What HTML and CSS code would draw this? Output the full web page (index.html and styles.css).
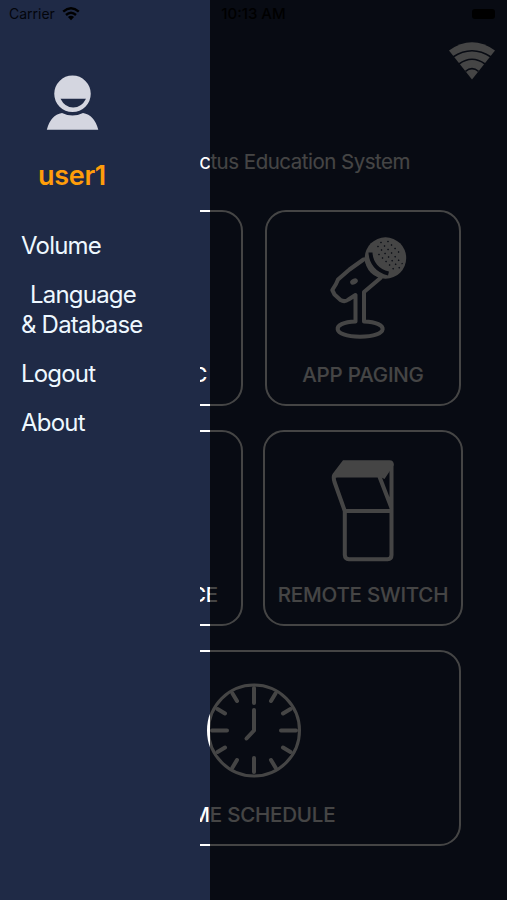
FILE: index.html
```
<!DOCTYPE html>
<html lang="en">
<head>
    <meta charset="UTF-8">
    <meta name="viewport" content="width=device-width, initial-scale=1.0">
    <title>Education System</title>
    <link rel="stylesheet" href="styles.css">
</head>
<body>
    <div class="app">
        <main class="home">
            <header class="home-header">
                <svg class="signal" width="48" height="40" viewBox="0 0 48 40">
                    <path class="solid" d="M1 9.500Q24 -7 47 9.500L24 38.500Z"/>
                    <path class="gap" d="M5 16Q24 3.500 43 16M11 23Q24 13.500 37 23M17.500 30.300Q24 25 30.500 30.300"/>
                </svg>
            </header>
            <h1 class="title">ctus Education System</h1>

            <div class="grid">
                <a class="card" href="#music"><span class="label label-music">C</span></a>
                <a class="card" href="#paging">
                    <svg class="icon" width="100" height="120" viewBox="-7.500 0 100 120">
                        <circle class="solid" cx="65" cy="28" r="20.700"/>
                        <path class="band" d="M45.500 27Q49 40 61 46.500"/>
                        <path class="slit" d="M50 22.500C50.500 33 57 41 68 43.500"/>
                        <g class="dots">
                            <path d="M60 12l22 22M67 11l14 14M57 16l23 23M58 24l17 17"/>
                        </g>
                        <path class="line" d="M43 29.500L29 39.500L17.500 49.500L15.500 54L11.800 60L14 64.500L20 70Q24 72.500 28 69.500L35 65V91.500C10 92 11 106.800 39.500 106.800C69 106.800 69 92 43.500 91.500V62L60 48"/>
                        <ellipse class="solid" cx="33.500" cy="51.500" rx="4" ry="2.800" transform="rotate(-25 33.500 51.500)"/>
                    </svg>
                    <span class="label">APP PAGING</span>
                </a>
                <a class="card" href="#source"><span class="label label-source">CE</span></a>
                <a class="card card-wide" href="#switch">
                    <svg class="icon" width="100" height="120" viewBox="-7.500 0 100 120">
                        <path class="solid" d="M22.500 10.300H69Q73.500 10.500 73.300 15L64 29L59 26.500H15.500L12 24Z"/>
                        <path class="line" d="M13.500 25.500Q12.800 28 14 32L24.300 61H71V15M13.500 27Q14 25.500 17 25.500H58.500L71 58M24.300 61V105Q24.500 109 28.500 109.300H67Q71 109 71 105V58"/>
                    </svg>
                    <span class="label">REMOTE SWITCH</span>
                </a>
                <a class="card card-full" href="#schedule">
                    <svg class="icon" width="100" height="120" viewBox="0 0 100 120">
                        <circle class="line" cx="50" cy="60.500" r="45.500"/>
                        <path class="line" d="M50 18V33M50 88V102M8 60.500H23M77 60.500H92M28.500 23.500L33 31M71.500 23.500L67 31M13.500 39L21 43.500M86.500 39L79 43.500M13.500 82L21 77.500M86.500 82L79 77.500M28.500 97.500L33 90M71.500 97.500L67 90"/>
                        <path class="line" d="M50 40V60.500L42.500 68.500"/>
                    </svg>
                    <span class="label">TIME SCHEDULE</span>
                </a>
            </div>
        </main>

        <div class="backdrop"></div>

        <aside class="drawer">
            <svg class="avatar" width="54" height="58" viewBox="0 0 54 58">
                <path d="M.800 54.800Q4.500 40 16 38Q26.500 43 37 38Q48.500 40 52.300 54.800Z"/>
                <circle class="head" cx="26.500" cy="18.800" r="19.500"/>
                <path class="smile" d="M14.500 23.800H40Q35.500 32.600 27.200 32.600Q19 32.600 14.500 23.800Z"/>
            </svg>
            <p class="username">user1</p>
            <nav>
                <ul class="menu">
                    <li><a href="#volume">Volume</a></li>
                    <li><a href="#language"><span class="indent">Language</span><br>&amp; Database</a></li>
                    <li><a href="#logout">Logout</a></li>
                    <li><a href="#about">About</a></li>
                </ul>
            </nav>
        </aside>

        <div class="statusbar">
            <span class="carrier">
                Carrier
                <svg width="18" height="14" viewBox="0 0 18 14">
                    <path d="M1.200 4.700Q9 -2.200 16.800 4.700M4 8Q9 3.500 14 8"/>
                    <path class="tip" d="M9 13.300L5.900 10.100Q9 7.600 12.100 10.100Z"/>
                </svg>
            </span>
            <span class="time">10:13 AM</span>
            <span class="battery"></span>
        </div>
    </div>
</body>
</html>
```
FILE: styles.css
```
* {
    margin: 0;
    padding: 0;
    box-sizing: border-box;
}

body {
    font-family: Inter, "Liberation Sans", sans-serif;
    background: #1f2a46;
    color: #fff;
}

a {
    color: inherit;
    text-decoration: none;
}

.app {
    position: relative;
    width: 507px;
    height: 900px;
    overflow: hidden;
}

/* home screen */
.home-header {
    display: flex;
    justify-content: flex-end;
    height: 147px;
    padding: 41px 11px 0 0;
}

.solid {
    fill: #fff;
}

.gap {
    fill: none;
    stroke: #1f2a46;
    stroke-width: 1.6;
}

.title {
    height: 63px;
    padding-right: 97px;
    font-size: 20.5px;
    font-weight: 400;
    letter-spacing: -0.5px;
    line-height: 30px;
    text-align: right;
    white-space: nowrap;
}

.grid {
    display: grid;
    grid-template-columns: 196px 196px;
    grid-auto-rows: 196px;
    gap: 24px 22px;
    padding-left: 47px;
}

.card {
    display: flex;
    flex-direction: column;
    align-items: center;
    justify-content: flex-end;
    padding-bottom: 16px;
    border: 2px solid #fff;
    border-radius: 21px;
}

.card-wide {
    margin: 0 -2px;
}

.card-full {
    grid-column: 1 / 3;
}

.icon {
    margin-bottom: 11px;
}

.line {
    fill: none;
    stroke: #fff;
    stroke-width: 4;
    stroke-linecap: round;
    stroke-linejoin: round;
}

circle.line {
    stroke-width: 3;
}

.band {
    fill: none;
    stroke: #fff;
    stroke-width: 5;
}

.slit {
    fill: none;
    stroke: #1f2a46;
    stroke-width: 4;
}

.dots {
    fill: none;
    stroke: #1f2a46;
    stroke-width: 1.4;
    stroke-dasharray: 1.4 3.6;
}

.label {
    font-size: 20.5px;
    font-weight: 500;
    letter-spacing: -0.2px;
    line-height: 27px;
    white-space: nowrap;
}

.label-music,
.label-source {
    align-self: flex-end;
}

.label-music {
    margin-right: 34px;
}

.label-source {
    margin-right: 23px;
}

/* side menu */
.backdrop {
    position: absolute;
    top: 0;
    bottom: 0;
    left: 210px;
    right: 0;
    background: rgba(0, 0, 0, 0.73);
}

.drawer {
    position: absolute;
    top: 0;
    left: 0;
    width: 200px;
    height: 100%;
    padding: 75px 21px 0;
    background: #1f2a46;
}

.avatar {
    display: block;
    margin-left: 25px;
    fill: #d4d6e0;
}

.avatar .head {
    stroke: #1f2a46;
    stroke-width: 2.5;
}

.avatar .smile {
    fill: #1f2a46;
}

.username {
    margin: 26px 0 0 17px;
    color: #ff9d0a;
    font-size: 27px;
    font-weight: 600;
    letter-spacing: -0.3px;
    line-height: 34px;
}

.menu {
    margin-top: 38px;
    list-style: none;
    color: #eef8ff;
    font-size: 24px;
    letter-spacing: -0.8px;
    line-height: 30px;
}

.menu li {
    margin-bottom: 19px;
}

.indent {
    margin-left: 9px;
}

/* status bar */
.statusbar {
    position: absolute;
    top: 0;
    left: 0;
    display: grid;
    grid-template-columns: 1fr auto 1fr;
    align-items: center;
    width: 100%;
    height: 27px;
    padding: 0 9px;
    color: #03050b;
    font-size: 14px;
}

.carrier {
    display: flex;
    align-items: center;
    gap: 7px;
}

.carrier svg {
    fill: none;
    stroke: #000;
    stroke-width: 2.4;
}

.carrier .tip {
    fill: #000;
    stroke: none;
}

.time {
    color: #000;
    font-size: 15px;
    font-weight: 500;
}

.battery {
    justify-self: end;
    width: 23px;
    height: 10px;
    margin-right: 3px;
    border-radius: 3px;
    background: #000;
}
```
